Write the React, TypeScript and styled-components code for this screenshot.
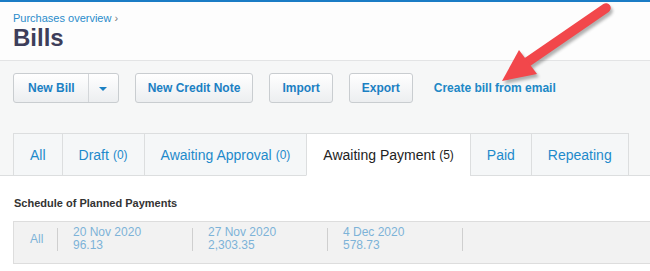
import styled, { createGlobalStyle } from 'styled-components';

const GlobalStyle = createGlobalStyle`
  html, body {
    margin: 0;
    padding: 0;
    overflow: hidden;
    background: #fff;
    font-family: 'Liberation Sans', Arial, sans-serif;
  }
`;

interface Tab {
  label: string;
  count?: number;
  active?: boolean;
}

const tabs: Tab[] = [
  { label: 'All' },
  { label: 'Draft', count: 0 },
  { label: 'Awaiting Approval', count: 0 },
  { label: 'Awaiting Payment', count: 5, active: true },
  { label: 'Paid' },
  { label: 'Repeating' },
];

const payments = [
  { date: '20 Nov 2020', amount: '96.13' },
  { date: '27 Nov 2020', amount: '2,303.35' },
  { date: '4 Dec 2020', amount: '578.73' },
];

export default function App() {
  return (
    <Page>
      <GlobalStyle />
      <Header>
        <Breadcrumb>
          Purchases overview <Chevron>›</Chevron>
        </Breadcrumb>
        <Title>Bills</Title>
      </Header>

      <Band>
        <Toolbar>
          <SplitButton>
            <SplitMain>New Bill</SplitMain>
            <SplitToggle>
              <Caret />
            </SplitToggle>
          </SplitButton>
          <Button>New Credit Note</Button>
          <Button>Import</Button>
          <Button>Export</Button>
          <EmailLink>Create bill from email</EmailLink>
        </Toolbar>

        <TabStrip>
          <TabEdge />
          {tabs.map((tab) => (
            <TabItem key={tab.label} $active={tab.active}>
              {tab.label}
              {tab.count !== undefined && <Count>({tab.count})</Count>}
            </TabItem>
          ))}
          <TabFill />
        </TabStrip>
      </Band>

      <Schedule>
        <ScheduleTitle>Schedule of Planned Payments</ScheduleTitle>
        <ScheduleBar>
          <AllCell>All</AllCell>
          {payments.map((p) => (
            <PaymentCell key={p.date}>
              <span>{p.date}</span>
              <span>{p.amount}</span>
            </PaymentCell>
          ))}
        </ScheduleBar>
      </Schedule>

      <ArrowLayer width="650" height="110" viewBox="0 0 650 110">
        <defs>
          <filter id="soft" x="-20%" y="-20%" width="140%" height="140%">
            <feGaussianBlur stdDeviation="1.5" />
          </filter>
        </defs>
        <g transform="translate(2 3)" fill="#555" stroke="#555" opacity="0.45" filter="url(#soft)">
          <line x1="606" y1="8" x2="526" y2="63" strokeWidth="9.5" strokeLinecap="round" />
          <polygon points="502,81 519,50 537,74" strokeWidth="0" />
        </g>
        <g fill="#f2474b" stroke="#f2474b">
          <line x1="606" y1="8" x2="526" y2="63" strokeWidth="9.5" strokeLinecap="round" />
          <polygon points="502,81 519,50 537,74" strokeWidth="0" />
        </g>
      </ArrowLayer>
    </Page>
  );
}

const Page = styled.div`
  position: relative;
  width: 650px;
  height: 271px;
  overflow: hidden;
  border-top: 2px solid #1b7cc5;
  box-sizing: border-box;
`;

const Header = styled.div`
  height: 59px;
  padding: 10px 13px 0;
  box-sizing: border-box;
  background: #fdfdfd;
  border-bottom: 1px solid #e3e4e5;
`;

const Breadcrumb = styled.div`
  font-size: 11px;
  line-height: 13px;
  color: #2a8ccb;
`;

const Chevron = styled.span`
  color: #777;
`;

const Title = styled.h1`
  margin: -1px 0 0;
  font-size: 24px;
  line-height: 28px;
  font-weight: bold;
  color: #3d3e5a;
`;

const Band = styled.div`
  background: #f6f7f7;
  padding-top: 12px;
`;

const Toolbar = styled.div`
  display: flex;
  align-items: center;
  padding-left: 13px;
  gap: 16px;
  height: 30px;
`;

const buttonBase = `
  height: 30px;
  box-sizing: border-box;
  border: 1px solid #c9cdd0;
  border-radius: 3px;
  background: linear-gradient(#ffffff, #eceef0);
  color: #1b80c3;
  font-family: 'Liberation Sans', Arial, sans-serif;
  font-size: 12px;
  font-weight: bold;
`;

const Button = styled.button`
  ${buttonBase}
  padding: 0 12px;
`;

const SplitButton = styled.div`
  ${buttonBase}
  display: flex;
  align-items: stretch;
`;

const SplitMain = styled.span`
  display: flex;
  align-items: center;
  padding: 0 13px 0 14px;
  border-right: 1px solid #d3d6d9;
`;

const SplitToggle = styled.span`
  display: flex;
  align-items: center;
  justify-content: center;
  width: 29px;
`;

const Caret = styled.span`
  width: 0;
  height: 0;
  border-left: 4px solid transparent;
  border-right: 4px solid transparent;
  border-top: 4px solid #1b80c3;
  margin-top: 1px;
`;

const EmailLink = styled.a`
  margin-left: 5px;
  font-size: 12px;
  font-weight: bold;
  color: #2088c6;
  cursor: pointer;
`;

const TabStrip = styled.div`
  display: flex;
  margin-top: 30px;
  height: 43px;
`;

const TabEdge = styled.div`
  width: 13px;
  border-bottom: 1px solid #dcdedf;
`;

const TabFill = styled.div`
  flex: 1;
  border-bottom: 1px solid #dcdedf;
`;

const TabItem = styled.div<{ $active?: boolean }>`
  display: flex;
  align-items: center;
  padding: 1px 16px 0;
  border-top: 1px solid #dcdedf;
  border-left: 1px solid #dcdedf;
  border-bottom: 1px solid ${(p) => (p.$active ? '#fff' : '#dcdedf')};
  background: ${(p) => (p.$active ? '#fff' : '#f5f7f8')};
  color: ${(p) => (p.$active ? '#222' : '#1e8acb')};
  font-size: 14px;
  white-space: pre;

  &:nth-last-child(2) {
    border-right: 1px solid #dcdedf;
  }
`;

const Count = styled.span`
  margin-left: 4px;
  font-size: 12px;
`;

const Schedule = styled.div`
  background: #fff;
  padding: 21px 0 0 13px;
`;

const ScheduleTitle = styled.div`
  padding-left: 1px;
  font-size: 11px;
  font-weight: bold;
  color: #333;
  line-height: 13px;
`;

const ScheduleBar = styled.div`
  display: flex;
  align-items: flex-start;
  margin-top: 11px;
  padding-top: 6px;
  height: 43px;
  box-sizing: border-box;
  background: #f2f2f2;
  border: 1px solid #dddddd;
  border-right: none;
  color: #7db3d8;
  font-size: 12px;
`;

const AllCell = styled.div`
  width: 44px;
  padding-left: 16px;
  padding-bottom: 1px;
  box-sizing: border-box;
  height: 23px;
  display: flex;
  align-items: center;
  border-right: 1px solid #cfcfcf;
`;

const PaymentCell = styled.div`
  position: relative;
  width: 135px;
  box-sizing: border-box;
  margin-top: -2px;
  padding-left: 15px;
  display: flex;
  flex-direction: column;
  line-height: 13px;

  &::after {
    content: '';
    position: absolute;
    right: 0;
    top: 2px;
    height: 23px;
    border-right: 1px solid #cfcfcf;
  }
`;

const ArrowLayer = styled.svg`
  position: absolute;
  top: -2px;
  left: 0;
  pointer-events: none;
`;
